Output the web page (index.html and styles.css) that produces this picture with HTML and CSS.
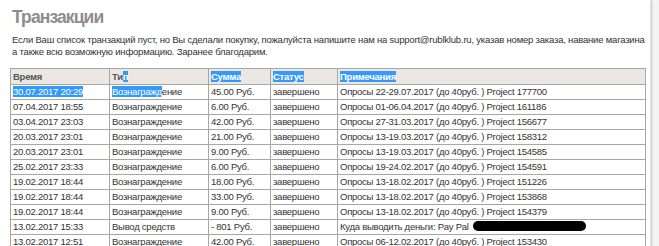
FILE: index.html
```html
<!DOCTYPE html>
<html lang="ru">
<head>
<meta charset="utf-8">
<title>Транзакции</title>
<link rel="stylesheet" href="styles.css">
</head>
<body>
<div class="page">
  <h1 class="title">Транзакции</h1>
  <p class="intro">Если Ваш список транзакций пуст, но Вы сделали покупку, пожалуйста напишите нам на support@rublklub.ru, указав номер заказа, навание магазина а также всю возможную информацию. Заранее благодарим.</p>
  <table class="tx">
    <colgroup>
      <col class="c-time"><col class="c-type"><col class="c-sum"><col class="c-status"><col class="c-note">
    </colgroup>
    <thead>
      <tr><th>Время</th><th>Ти<span class="sel">п</span></th><th><span class="sel">Сумма</span></th><th><span class="sel">Статус</span></th><th><span class="sel">Примечания</span></th></tr>
    </thead>
    <tbody>
      <tr><td><span class="sel">30.07.2017 20:29</span></td><td><span class="sel">Вознагражд</span>ение</td><td>45.00 Руб.</td><td>завершено</td><td>Опросы 22-29.07.2017 (до 40руб. ) Project 177700</td></tr>
      <tr><td>07.04.2017 18:55</td><td>Вознаграждение</td><td>6.00 Руб.</td><td>завершено</td><td>Опросы 01-06.04.2017 (до 40руб. ) Project 161186</td></tr>
      <tr><td>03.04.2017 23:03</td><td>Вознаграждение</td><td>42.00 Руб.</td><td>завершено</td><td>Опросы 27-31.03.2017 (до 40руб. ) Project 156677</td></tr>
      <tr><td>20.03.2017 23:01</td><td>Вознаграждение</td><td>21.00 Руб.</td><td>завершено</td><td>Опросы 13-19.03.2017 (до 40руб. ) Project 158312</td></tr>
      <tr><td>20.03.2017 23:01</td><td>Вознаграждение</td><td>9.00 Руб.</td><td>завершено</td><td>Опросы 13-19.03.2017 (до 40руб. ) Project 154585</td></tr>
      <tr><td>25.02.2017 23:33</td><td>Вознаграждение</td><td>6.00 Руб.</td><td>завершено</td><td>Опросы 19-24.02.2017 (до 40руб. ) Project 154591</td></tr>
      <tr><td>19.02.2017 18:44</td><td>Вознаграждение</td><td>18.00 Руб.</td><td>завершено</td><td>Опросы 13-18.02.2017 (до 40руб. ) Project 151226</td></tr>
      <tr><td>19.02.2017 18:44</td><td>Вознаграждение</td><td>33.00 Руб.</td><td>завершено</td><td>Опросы 13-18.02.2017 (до 40руб. ) Project 153868</td></tr>
      <tr><td>19.02.2017 18:44</td><td>Вознаграждение</td><td>9.00 Руб.</td><td>завершено</td><td>Опросы 13-18.02.2017 (до 40руб. ) Project 154379</td></tr>
      <tr><td>13.02.2017 15:33</td><td>Вывод средств</td><td>- 801 Руб.</td><td>завершено</td><td>Куда выводить деньги: Pay Pal <span class="redact"></span></td></tr>
      <tr><td>13.02.2017 12:51</td><td>Вознаграждение</td><td>42.00 Руб.</td><td>завершено</td><td>Опросы 06-12.02.2017 (до 40руб. ) Project 153430</td></tr>
    </tbody>
  </table>
</div>
</body>
</html>
```

FILE: styles.css
```css
html, body {
  margin: 0;
  padding: 0;
  background: #f4f4f4;
}
body {
  font-family: "Liberation Sans", Arial, sans-serif;
  color: #333;
}
.page {
  width: 640px;
  height: 246px;
  overflow: hidden;
  background: #fff;
  padding: 0 0 0 10px;
  box-shadow: 1px 0 2px rgba(0, 0, 0, 0.18);
  border-right: 1px solid #e2e2e2;
}
.title {
  margin: 0;
  padding: 7px 0 0 2px;
  font-size: 17.5px;
  line-height: 20px;
  font-weight: bold;
  color: #8d8d8d;
  letter-spacing: -0.9px;
}
.intro {
  margin: 7px 0 10px 2px;
  font-size: 9.5px;
  line-height: 12px;
  letter-spacing: -0.2px;
  color: #333;
  width: 636px;
}
.tx {
  border-collapse: collapse;
  table-layout: fixed;
  width: 635px;
  font-size: 9.5px;
  letter-spacing: -0.25px;
  color: #333;
}
.c-time { width: 99px; }
.c-type { width: 99px; }
.c-sum { width: 62px; }
.c-status { width: 67px; }
.c-note { width: 308px; }
.tx th, .tx td {
  border: 1px solid #a9a7a3;
  padding: 0 0 0 2px;
  text-align: left;
  white-space: nowrap;
  overflow: hidden;
  height: 14px;
  line-height: 14px;
}
.tx th {
  background: #ebe8e3;
  color: #585858;
  font-weight: bold;
  height: 15px;
}
.tx thead tr {
  border-top: 1px solid #8d8b88;
}
.sel {
  background: #3399ff;
  color: #fff;
}
.redact {
  display: inline-block;
  width: 113px;
  height: 10px;
  background: #000;
  border-radius: 5px;
  vertical-align: -1px;
  margin-left: 2px;
}
```
